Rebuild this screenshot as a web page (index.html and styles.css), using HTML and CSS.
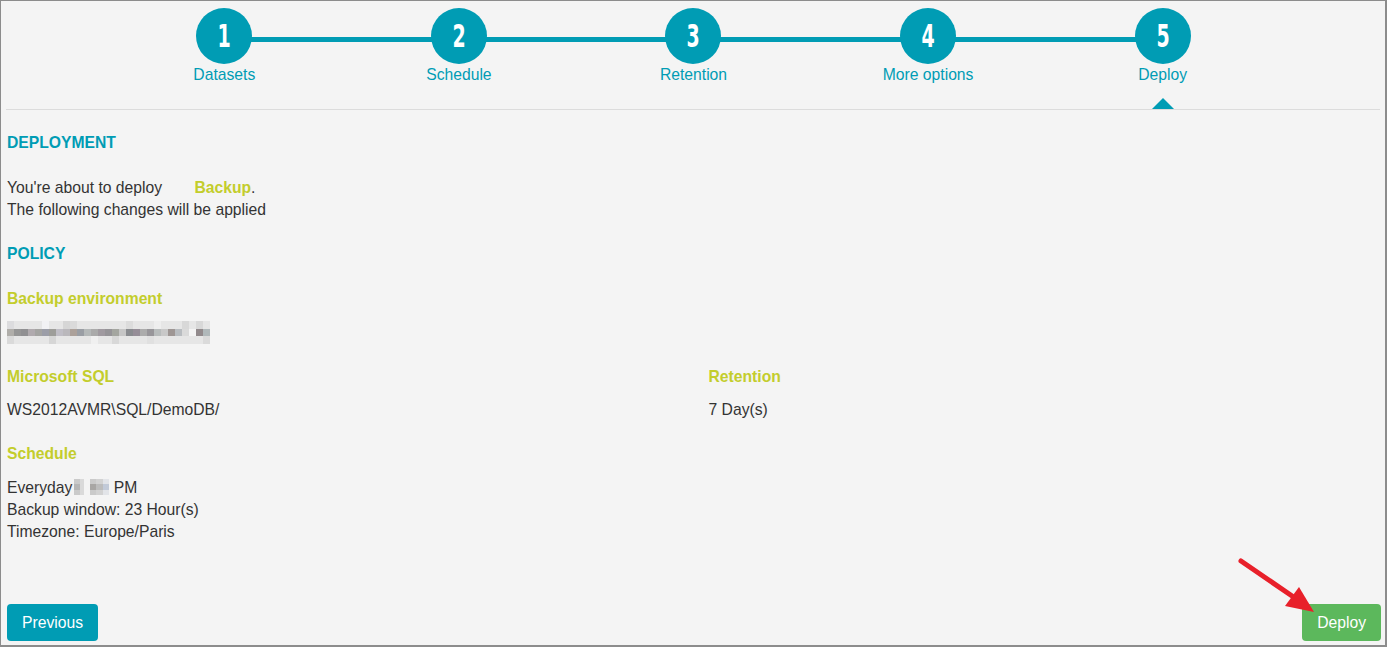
FILE: index.html
```html
<!DOCTYPE html>
<html>
<head>
<meta charset="utf-8">
<link rel="stylesheet" href="styles.css">
</head>
<body>
<div class="frame">
  <div class="stepper">
    <div class="rail"></div>
    <div class="step"><div class="num"><span>1</span></div><div class="label">Datasets</div></div>
    <div class="step"><div class="num"><span>2</span></div><div class="label">Schedule</div></div>
    <div class="step"><div class="num"><span>3</span></div><div class="label">Retention</div></div>
    <div class="step"><div class="num"><span>4</span></div><div class="label">More options</div></div>
    <div class="step active"><div class="num"><span>5</span></div><div class="label">Deploy</div></div>
  </div>
  <div class="sep"></div>

  <div class="content">
    <h2 class="section">DEPLOYMENT</h2>
    <p class="text">You're about to deploy <span class="name">Backup</span>.<br>The following changes will be applied</p>

    <h2 class="section">POLICY</h2>
    <h3 class="label-g">Backup environment</h3>
    <div class="value">
      <svg class="mosaic" width="203" height="23" viewBox="0 0 203 23">
        <rect x="0" y="0" width="203" height="23" fill="#e6e6e6"/>
        <g>
          <rect x="0" y="0" width="7" height="8" fill="#dcdcde"/><rect x="35" y="0" width="7" height="8" fill="#f2f2f4"/><rect x="56" y="0" width="7" height="8" fill="#d6d6d6"/><rect x="63" y="0" width="7" height="8" fill="#dadada"/><rect x="119" y="0" width="7" height="8" fill="#dcdcdc"/><rect x="189" y="0" width="7" height="8" fill="#d8d8d8"/><rect x="175" y="0" width="7" height="8" fill="#d8d8d8"/><rect x="147" y="0" width="7" height="8" fill="#eeeeee"/>
        </g>
        <g>
          <rect x="0" y="8" width="7" height="7" fill="#b0aeaa"/>
          <rect x="7" y="8" width="7" height="7" fill="#969696"/>
          <rect x="14" y="8" width="7" height="7" fill="#909092"/>
          <rect x="21" y="8" width="7" height="7" fill="#b0aaae"/>
          <rect x="28" y="8" width="7" height="7" fill="#a4a4a2"/>
          <rect x="35" y="8" width="7" height="7" fill="#9c9ea8"/>
          <rect x="42" y="8" width="7" height="7" fill="#9e9e9a"/>
          <rect x="49" y="8" width="7" height="7" fill="#c0bec6"/>
          <rect x="56" y="8" width="7" height="7" fill="#bab8bc"/>
          <rect x="63" y="8" width="7" height="7" fill="#aca19a"/>
          <rect x="70" y="8" width="7" height="7" fill="#9a9ea4"/>
          <rect x="77" y="8" width="7" height="7" fill="#b4b8b8"/>
          <rect x="84" y="8" width="7" height="7" fill="#aaaaaa"/>
          <rect x="91" y="8" width="7" height="7" fill="#a09aa0"/>
          <rect x="98" y="8" width="7" height="7" fill="#969498"/>
          <rect x="105" y="8" width="7" height="7" fill="#a4a6a0"/>
          <rect x="112" y="8" width="7" height="7" fill="#c6c6c6"/>
          <rect x="119" y="8" width="7" height="7" fill="#8a8c90"/>
          <rect x="126" y="8" width="7" height="7" fill="#968e98"/>
          <rect x="133" y="8" width="7" height="7" fill="#acacac"/>
          <rect x="140" y="8" width="7" height="7" fill="#98969a"/>
          <rect x="147" y="8" width="7" height="7" fill="#b8bcbc"/>
          <rect x="154" y="8" width="7" height="7" fill="#c8c8c8"/>
          <rect x="161" y="8" width="7" height="7" fill="#9e9694"/>
          <rect x="168" y="8" width="7" height="7" fill="#b8bcc0"/>
          <rect x="175" y="8" width="7" height="7" fill="#dadada"/>
          <rect x="182" y="8" width="7" height="7" fill="#f4f4f4"/>
          <rect x="189" y="8" width="7" height="7" fill="#928a8c"/>
          <rect x="196" y="8" width="7" height="7" fill="#b0b8ba"/>
        </g>
        <g>
          <rect x="0" y="15" width="7" height="8" fill="#dadada"/><rect x="42" y="15" width="7" height="8" fill="#d6d6d6"/><rect x="84" y="15" width="7" height="8" fill="#f0f0f0"/><rect x="105" y="15" width="7" height="8" fill="#d8d8d8"/><rect x="140" y="15" width="7" height="8" fill="#e0e0e0"/><rect x="196" y="15" width="7" height="8" fill="#dadada"/>
        </g>
      </svg>
    </div>

    <div class="cols">
      <div class="col">
        <h3 class="label-g tight">Microsoft SQL</h3>
        <p class="value">WS2012AVMR\SQL/DemoDB/</p>
      </div>
      <div class="col">
        <h3 class="label-g tight">Retention</h3>
        <p class="value">7 Day(s)</p>
      </div>
    </div>

    <h3 class="label-g tight">Schedule</h3>
    <p class="value loose">Everyday<svg class="blur" width="36" height="16" viewBox="0 0 36 16"><rect x="1" y="0" width="6" height="16" fill="#cacaca"/><rect x="7" y="0" width="4" height="16" fill="#dadada"/><rect x="1" y="5" width="6" height="6" fill="#b6b6b6"/><rect x="17" y="0" width="6" height="16" fill="#cacaca"/><rect x="23" y="0" width="7" height="16" fill="#d2d2d2"/><rect x="17" y="5" width="6" height="6" fill="#a8a6a4"/><rect x="23" y="5" width="7" height="6" fill="#bcbcbc"/><rect x="30" y="0" width="6" height="16" fill="#e2e4e8"/><rect x="30" y="5" width="6" height="6" fill="#c2cad8"/></svg> PM<br>Backup window: 23 Hour(s)<br>Timezone: Europe/Paris</p>

    <div class="actions">
      <button class="btn btn-prev">Previous</button>
      <button class="btn btn-deploy">Deploy</button>
    </div>
  </div>

  <svg class="arrow" width="90" height="65" viewBox="0 0 90 65">
    <line x1="4" y1="4" x2="58" y2="41" stroke="#e8202a" stroke-width="5" stroke-linecap="round"/>
    <polygon points="77,55 48,49 62,30" fill="#e8202a"/>
  </svg>
</div>
</body>
</html>
```

FILE: styles.css
```css
* { box-sizing: border-box; }
html, body { margin: 0; padding: 0; }
body {
  font-family: "Liberation Sans", Arial, sans-serif;
  font-size: 15.7px;
  color: #333333;
  background: #ffffff;
}
.frame {
  position: relative;
  width: 1387px;
  height: 647px;
  background: #f4f4f4;
  border: 1px solid #8c8c8c;
  border-right: 2px solid #8c8c8c;
  border-bottom: 2px solid #8c8c8c;
  display: flex;
  flex-direction: column;
  padding: 0 4px 0 5px;
}
.stepper {
  position: relative;
  width: 1173px;
  margin: 7px auto 0;
  display: flex;
}
.rail {
  position: absolute;
  left: 117px;
  right: 117px;
  top: 29px;
  height: 5px;
  background: #009cb4;
}
.step {
  position: relative;
  flex: 1;
  display: flex;
  flex-direction: column;
  align-items: center;
}
.num {
  width: 56px;
  height: 56px;
  border-radius: 50%;
  background: #009cb4;
  color: #ffffff;
  display: flex;
  align-items: center;
  justify-content: center;
  font-family: "DejaVu Sans Condensed", "DejaVu Sans", sans-serif;
  font-weight: bold;
  font-size: 32px;
  line-height: 1;
}
.num span {
  display: inline-block;
  transform: scaleX(0.66);
}
.label {
  margin-top: 2px;
  color: #009cb4;
  font-size: 15.7px;
  line-height: 18px;
}
.step.active::after {
  content: "";
  position: absolute;
  bottom: -25px;
  left: 50%;
  margin-left: -11px;
  border-left: 11px solid transparent;
  border-right: 11px solid transparent;
  border-bottom: 11px solid #009cb4;
}
.sep {
  margin-top: 25px;
  height: 1px;
  background: #dcdcdc;
  margin-right: 1px;
}
.content {
  flex: 1;
  display: flex;
  flex-direction: column;
  padding-left: 1px;
}
.section {
  margin: 22px 0 0;
  font-size: 15.7px;
  line-height: 22px;
  font-weight: bold;
  color: #009cb4;
}
.text {
  margin: 23px 0 0;
  line-height: 22px;
}
.name {
  margin-left: 28px;
  font-weight: bold;
  color: #c3cd2c;
}
.label-g {
  margin: 23px 0 0;
  font-size: 15.7px;
  line-height: 22px;
  font-weight: bold;
  color: #c3cd2c;
}
.label-g.tight { margin-top: 22px; }
.value {
  margin: 11px 0 0;
  line-height: 22px;
}
.value.loose { margin-top: 12px; }
.mosaic { display: block; }
.cols {
  display: flex;
}
.col { flex: 1; }
.col + .col { padding-left: 29px; }
.blur {
  vertical-align: -2px;
  margin-left: 1px;
}
.actions {
  margin-top: auto;
  margin-bottom: 4px;
  display: flex;
  justify-content: space-between;
}
.btn {
  font-family: "Liberation Sans", Arial, sans-serif;
  font-size: 15.7px;
  line-height: 21px;
  color: #ffffff;
  border: none;
  border-radius: 4px;
  padding: 8px 15px;
  height: 37px;
}
.btn-prev { background: #009cb4; }
.btn-deploy { background: #5cb85c; }
.arrow {
  position: absolute;
  left: 1236px;
  top: 556px;
}
```
